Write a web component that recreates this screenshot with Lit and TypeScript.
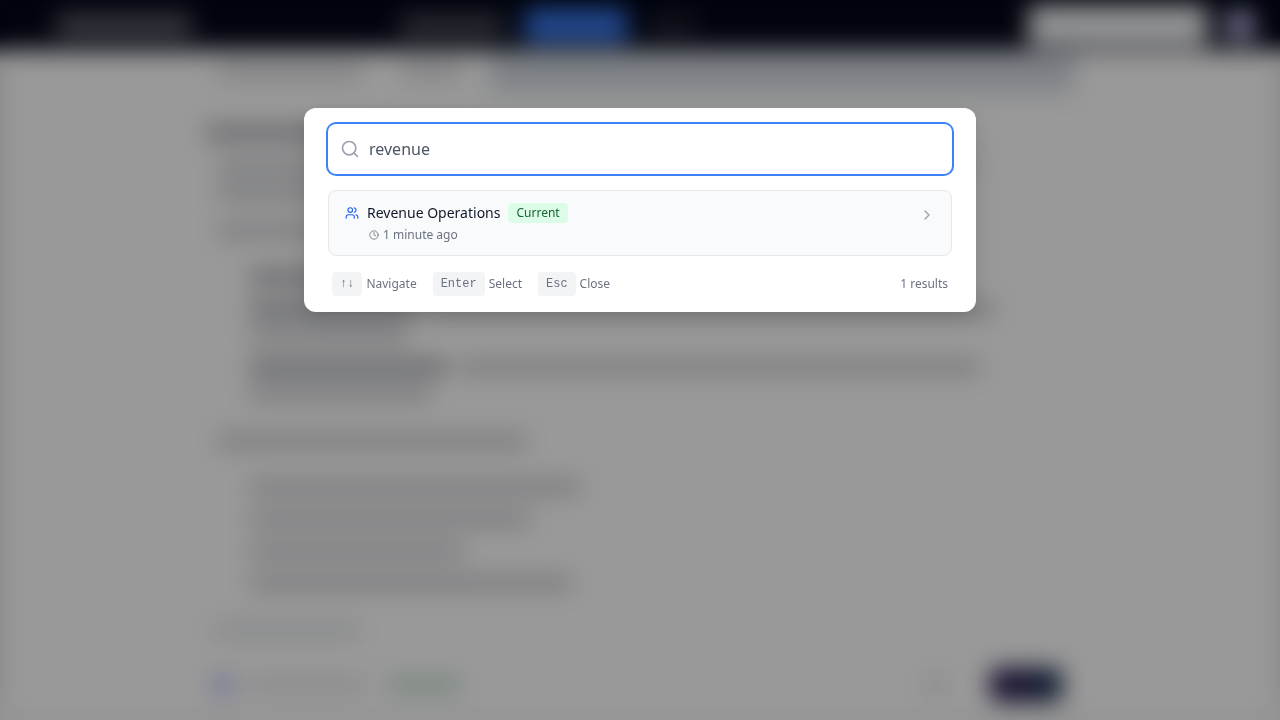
import { LitElement, html, css, svg } from "lit";
import { customElement, state, property } from "lit/decorators.js";

interface Stroke {
  w: number;
  bold?: boolean;
}

interface Block {
  kind: string;
  rows: Stroke[][];
}

interface Team {
  name: string;
  current: boolean;
  seen: string;
}

/* Widths are percentages of the reading column. */
const BLOCKS: Block[] = [
  { kind: "heading", rows: [[{ w: 32, bold: true }]] },
  { kind: "para", rows: [[{ w: 88 }], [{ w: 60 }]] },
  { kind: "para loose", rows: [[{ w: 50 }]] },
  {
    kind: "list",
    rows: [[{ w: 26, bold: true }, { w: 42 }]],
  },
  {
    kind: "list next",
    rows: [[{ w: 20, bold: true }, { w: 69 }], [{ w: 19 }]],
  },
  {
    kind: "list next",
    rows: [[{ w: 24, bold: true }, { w: 63 }], [{ w: 22 }]],
  },
  { kind: "para wide", rows: [[{ w: 36 }]] },
  { kind: "list", rows: [[{ w: 40 }]] },
  { kind: "list next", rows: [[{ w: 34 }]] },
  { kind: "list next", rows: [[{ w: 26 }]] },
  { kind: "list next", rows: [[{ w: 39 }]] },
];

const TEAMS: Team[] = [
  { name: "Revenue Operations", current: true, seen: "1 minute ago" },
];

const icon = (cls: string, body: unknown) => html`
  <svg
    class=${cls}
    viewBox="0 0 24 24"
    fill="none"
    stroke="currentColor"
    stroke-width="2"
    stroke-linecap="round"
    stroke-linejoin="round"
    aria-hidden="true"
  >
    ${body}
  </svg>
`;

@customElement("workspace-page")
export class WorkspacePage extends LitElement {
  static styles = css`
    :host {
      display: flex;
      flex-direction: column;
      height: 100vh;
      overflow: hidden;
      filter: blur(12px);
    }
    .bar {
      flex: none;
      display: flex;
      align-items: center;
      height: 50px;
      padding: 0 24px 0 56px;
      background: #020617;
    }
    .brand {
      width: 136px;
      height: 18px;
      background: #777a82;
    }
    .nav {
      flex: 1;
      display: flex;
      align-items: center;
      justify-content: center;
      gap: 20px;
      padding-right: 124px;
    }
    .tab {
      width: 104px;
      height: 14px;
      background: #6c6f77;
    }
    .tab.active {
      height: 34px;
      border-radius: 6px;
      background: #3b7af0;
    }
    .tab.short {
      width: 48px;
      background: #2f333d;
    }
    .picker {
      width: 180px;
      height: 40px;
      border-radius: 6px;
      background: #f8f9fb;
    }
    .avatar {
      width: 32px;
      height: 32px;
      margin-left: 16px;
      border-radius: 50%;
      background: #c0beec;
    }
    .page {
      flex: 1;
      display: flex;
      flex-direction: column;
      min-height: 0;
      background: #ffffff;
    }
    .column {
      box-sizing: border-box;
      width: 100%;
      max-width: 900px;
      margin: 0 auto;
      padding: 0 16px;
    }
    .top {
      display: flex;
      align-items: center;
      gap: 40px;
      height: 42px;
      padding-left: 12px;
    }
    .chunk {
      width: 144px;
      height: 12px;
      background: #cacccf;
    }
    .chunk.small {
      width: 60px;
    }
    .bubble {
      flex: 1;
      height: 100%;
      margin-left: -12px;
      background: #d3d9e1;
    }
    .heading {
      margin-top: 28px;
    }
    .para {
      margin-top: 8px;
      padding-left: 12px;
    }
    .loose {
      margin-top: 12px;
    }
    .wide {
      margin-top: 22px;
    }
    .list {
      margin-top: 20px;
      padding-left: 44px;
    }
    .next {
      margin-top: 6px;
    }
    .row {
      display: flex;
      align-items: center;
      gap: 12px;
      height: 26px;
    }
    .ink {
      height: 12px;
      background: #bfc1c6;
    }
    .ink.bold {
      background: #96989f;
    }
    .composer {
      box-sizing: border-box;
      width: 100%;
      max-width: 900px;
      margin: 8px auto 0;
      padding: 20px 28px 20px 24px;
    }
    .hint {
      width: 146px;
      height: 12px;
      background: #dadddf;
    }
    .tools {
      display: flex;
      align-items: center;
      gap: 16px;
      margin-top: 32px;
    }
    .dot {
      width: 18px;
      height: 18px;
      border-radius: 50%;
      background: #a0a0f5;
    }
    .label {
      width: 116px;
      height: 12px;
      background: #dfdfe0;
    }
    .status {
      width: 72px;
      height: 14px;
      margin-left: 8px;
      background: #c2ddcc;
    }
    .clip {
      width: 20px;
      height: 14px;
      margin-left: auto;
      margin-right: 28px;
      background: #dedede;
    }
    .send {
      width: 72px;
      height: 34px;
      border-radius: 8px;
      background: linear-gradient(90deg, #321650, #12304c);
    }
  `;

  render() {
    return html`
      <div class="bar">
        <div class="brand"></div>
        <div class="nav">
          <div class="tab"></div>
          <div class="tab active"></div>
          <div class="tab short"></div>
        </div>
        <div class="picker"></div>
        <div class="avatar"></div>
      </div>
      <div class="page">
        <div class="column">
          <div class="top">
            <div class="chunk"></div>
            <div class="chunk small"></div>
            <div class="bubble"></div>
          </div>
          ${BLOCKS.map(
            (b) => html`<div class=${b.kind}>
              ${b.rows.map(
                (row) => html`<div class="row">
                  ${row.map(
                    (s) =>
                      html`<div
                        class=${s.bold ? "ink bold" : "ink"}
                        style="width:${s.w}%"
                      ></div>`
                  )}
                </div>`
              )}
            </div>`
          )}
        </div>
        <div class="composer">
          <div class="hint"></div>
          <div class="tools">
            <div class="dot"></div>
            <div class="label"></div>
            <div class="status"></div>
            <div class="clip"></div>
            <div class="send"></div>
          </div>
        </div>
      </div>
    `;
  }
}

@customElement("team-result")
export class TeamResult extends LitElement {
  @property({ attribute: false }) team!: Team;

  static styles = css`
    :host {
      display: block;
    }
    .card {
      box-sizing: border-box;
      display: flex;
      align-items: flex-start;
      justify-content: space-between;
      width: 100%;
      padding: 12px 16px;
      border: 1px solid #e5e7eb;
      border-radius: 8px;
      background: #f9fafb;
      font: inherit;
      text-align: left;
      cursor: pointer;
    }
    .title {
      display: flex;
      align-items: center;
      gap: 8px;
    }
    .name {
      font-size: 14px;
      line-height: 20px;
      color: #111827;
    }
    .badge {
      padding: 2px 8px;
      border-radius: 4px;
      background: #dcfce7;
      font-size: 12px;
      line-height: 16px;
      color: #166534;
    }
    .meta {
      display: flex;
      align-items: center;
      gap: 4px;
      margin: 4px 0 0 24px;
      font-size: 12px;
      line-height: 16px;
      color: #6b7280;
    }
    .users {
      width: 14px;
      height: 14px;
      color: #2563eb;
    }
    .clock {
      width: 10px;
      height: 10px;
    }
    .chevron {
      width: 16px;
      height: 16px;
      margin-top: 4px;
      color: #9ca3af;
    }
  `;

  render() {
    const { name, current, seen } = this.team;
    return html`
      <button class="card" type="button">
        <div>
          <div class="title">
            ${icon(
              "users",
              svg`<path d="M16 21v-2a4 4 0 0 0-4-4H6a4 4 0 0 0-4 4v2" />
                <circle cx="9" cy="7" r="4" />
                <path d="M22 21v-2a4 4 0 0 0-3-3.87" />
                <path d="M16 3.13a4 4 0 0 1 0 7.75" />`
            )}
            <span class="name">${name}</span>
            ${current ? html`<span class="badge">Current</span>` : null}
          </div>
          <div class="meta">
            ${icon(
              "clock",
              svg`<circle cx="12" cy="12" r="10" />
                <path d="M12 6v6l4 2" />`
            )}
            <span>${seen}</span>
          </div>
        </div>
        ${icon("chevron", svg`<path d="m9 18 6-6-6-6" />`)}
      </button>
    `;
  }
}

@customElement("app-root")
export class AppRoot extends LitElement {
  @state() private query = "revenue";

  static styles = css`
    :host {
      display: block;
      overflow: hidden;
      background: linear-gradient(
        #020617 36px,
        #dcdcde 64px,
        #dcdcde 95%,
        #f4f4f5 100%
      );
      font-family: "Noto Sans", sans-serif;
    }
    .overlay {
      position: fixed;
      inset: 0;
      box-sizing: border-box;
      padding: 15vh 16px 16px;
      background: rgba(0, 0, 0, 0.4);
    }
    .dialog {
      box-sizing: border-box;
      width: 100%;
      max-width: 672px;
      margin: 0 auto;
      padding: 16px 24px;
      border-radius: 12px;
      background: #ffffff;
      box-shadow:
        0 6px 16px 0 rgba(0, 0, 0, 0.08),
        0 3px 6px -4px rgba(0, 0, 0, 0.12),
        0 9px 28px 8px rgba(0, 0, 0, 0.05);
    }
    .search {
      display: flex;
      align-items: center;
      gap: 9px;
      padding: 13px 12px;
      border-radius: 8px;
      box-shadow: 0 0 0 2px #3b82f6;
    }
    .glass {
      flex: none;
      width: 20px;
      height: 20px;
      color: #9ca3af;
    }
    .field {
      flex: 1;
      min-width: 0;
      height: 24px;
      padding: 0;
      border: 0;
      outline: 0;
      background: transparent;
      font: inherit;
      font-size: 16px;
      line-height: 24px;
      color: #4b5563;
    }
    .results {
      display: grid;
      gap: 8px;
      margin: 16px 0;
      padding: 0;
      list-style: none;
    }
    .footer {
      display: flex;
      align-items: center;
      gap: 16px;
      padding: 0 4px;
      font-size: 12px;
      line-height: 16px;
      color: #6b7280;
    }
    .key {
      display: flex;
      align-items: center;
      gap: 4px;
    }
    .cap {
      padding: 4px 8px;
      border-radius: 4px;
      background: #f3f4f6;
      font-family: "Liberation Mono", monospace;
      font-size: 12px;
    }
    .count {
      margin-left: auto;
    }
  `;

  private onInput(e: Event) {
    this.query = (e.target as HTMLInputElement).value;
  }

  render() {
    const q = this.query.trim().toLowerCase();
    const found = TEAMS.filter((t) => t.name.toLowerCase().includes(q));
    return html`
      <workspace-page aria-hidden="true"></workspace-page>
      <div class="overlay">
        <div class="dialog" role="dialog" aria-modal="true">
          <label class="search">
            ${icon(
              "glass",
              svg`<circle cx="11" cy="11" r="8" /><path d="m21 21-4.3-4.3" />`
            )}
            <input
              class="field"
              type="text"
              .value=${this.query}
              @input=${this.onInput}
            />
          </label>
          <ul class="results">
            ${found.map(
              (t) => html`<li><team-result .team=${t}></team-result></li>`
            )}
          </ul>
          <div class="footer">
            <span class="key"><kbd class="cap">↑↓</kbd>Navigate</span>
            <span class="key"><kbd class="cap">Enter</kbd>Select</span>
            <span class="key"><kbd class="cap">Esc</kbd>Close</span>
            <span class="count">${found.length} results</span>
          </div>
        </div>
      </div>
    `;
  }
}
